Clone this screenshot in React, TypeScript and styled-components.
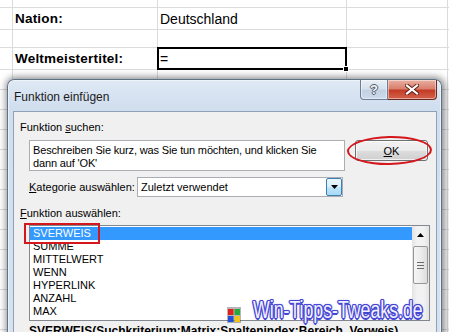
import React from 'react';
import styled, { createGlobalStyle } from 'styled-components';

const GlobalStyle = createGlobalStyle`
    html, body {
        margin: 0;
        padding: 0;
    }
    body {
        background: #fff;
        font-family: "Liberation Sans", Arial, sans-serif;
    }
`;

const uiFont = `"Liberation Sans", Arial, sans-serif`;

const Screen = styled.div`
    position: relative;
    width: 449px;
    height: 332px;
    overflow: hidden;
    background: #fff;
`;

/* spreadsheet behind the dialog */
const Sheet = styled.div`
    display: grid;
    grid-template-columns: 12px 144px 188px 100px 4px;
    grid-template-rows: 7px 21px 17px 21px repeat(14, 19px);
    gap: 1px;
    background: #d9dbdd;
    width: 452px;
`;

const Cell = styled.div<{ $bold?: boolean; $active?: boolean }>`
    position: relative;
    background: #fff;
    display: flex;
    align-items: center;
    padding-left: 2px;
    font-family: ${uiFont};
    font-size: ${(p) => (p.$bold ? '13.5px' : '14px')};
    font-weight: ${(p) => (p.$bold ? 'bold' : 'normal')};
    letter-spacing: ${(p) => (p.$bold ? '0.2px' : '0')};
    color: #000;
    white-space: nowrap;
    overflow: ${(p) => (p.$active ? 'visible' : 'hidden')};
    z-index: ${(p) => (p.$active ? 1 : 0)};
    box-shadow: ${(p) => (p.$active ? '0 0 0 1px #000, inset 0 0 0 1px #000' : 'none')};

    ${(p) =>
        p.$active &&
        `
        &::after {
            content: '';
            position: absolute;
            right: -3px;
            bottom: -3px;
            width: 4px;
            height: 4px;
            background: #000;
            border: 1px solid #fff;
        }
    `}
`;

/* dialog window */
const Window = styled.div`
    position: absolute;
    left: 7px;
    top: 79px;
    width: 435px;
    height: 270px;
    box-sizing: border-box;
    border: 1px solid #5f7189;
    border-bottom: none;
    border-radius: 7px 7px 0 0;
    background: linear-gradient(180deg, #dfe9f5 0px, #d0deee 28px, #d6e2f0 100%);
    box-shadow: 1px 0 7px 2px rgba(0, 0, 0, 0.45), inset 0 0 0 1px rgba(255, 255, 255, 0.55);
    display: flex;
    flex-direction: column;
    font-family: ${uiFont};
`;

const TitleBar = styled.div`
    display: flex;
    align-items: flex-start;
    height: 31px;
    padding: 0 4px 0 6px;
`;

const Title = styled.span`
    padding-top: 10px;
    font-size: 12px;
    line-height: 14px;
    color: #1b1b1b;
`;

const CaptionButtons = styled.div`
    margin-left: auto;
    display: flex;
`;

const CaptionButton = styled.div<{ $close?: boolean }>`
    width: ${(p) => (p.$close ? '49px' : '28px')};
    height: 20px;
    box-sizing: border-box;
    display: flex;
    align-items: center;
    justify-content: center;
    border: 1px solid ${(p) => (p.$close ? '#6b2a20' : '#6c7d94')};
    border-top: none;
    border-left-width: ${(p) => (p.$close ? '0' : '1px')};
    border-radius: ${(p) => (p.$close ? '0 0 4px 0' : '0 0 0 4px')};
    background: ${(p) =>
        p.$close
            ? 'linear-gradient(180deg, #eab0a2 0%, #d9806e 45%, #c43c26 55%, #d4634c 100%)'
            : 'linear-gradient(180deg, #e9f0f7 0%, #d6e1ed 45%, #c3d2e3 55%, #ccdaea 100%)'};
    box-shadow: inset 0 0 0 1px rgba(255, 255, 255, 0.45);
`;

const HelpGlyph = styled.span`
    font-family: ${uiFont};
    font-weight: bold;
    font-size: 13px;
    color: #f4f6f9;
    text-shadow: -1px 0 #4c5866, 1px 0 #4c5866, 0 -1px #4c5866, 0 1px #4c5866;
`;

const Client = styled.div`
    flex: 1;
    margin: 0 4px 0 5px;
    border: 1px solid #8fa1b7;
    border-bottom: none;
    background: #f0f0f0;
    padding: 8px 0 0 6px;
    display: flex;
    flex-direction: column;
    font-size: 11px;
    color: #000;
`;

const SectionLabel = styled.div<{ $top?: number }>`
    height: 14px;
    line-height: 14px;
    margin-top: ${(p) => p.$top ?? 0}px;
`;

const SearchRow = styled.div`
    display: flex;
    gap: 10px;
    margin: 6px 0 0 9px;
`;

const SearchBox = styled.div`
    width: 316px;
    height: 31px;
    box-sizing: border-box;
    border: 1px solid #abadb3;
    background: #fff;
    padding: 3px 3px;
    line-height: 13px;
    font-size: 11px;
    letter-spacing: -0.15px;
`;

const OkWrap = styled.div`
    position: relative;
`;

const PushButton = styled.div`
    width: 73px;
    height: 21px;
    box-sizing: border-box;
    border: 1px solid #707070;
    border-radius: 3px;
    background: linear-gradient(180deg, #f2f2f2 0%, #ebebeb 50%, #dddddd 51%, #cfcfcf 100%);
    box-shadow: inset 0 0 0 1px rgba(255, 255, 255, 0.7);
    display: flex;
    align-items: center;
    justify-content: center;
    font-size: 11px;
`;

const RedEllipse = styled.div`
    position: absolute;
    left: -8px;
    top: -4px;
    width: 85px;
    height: 29px;
    box-sizing: border-box;
    border: 2px solid #d3171d;
    border-radius: 50%;
    transform: rotate(-1deg);
`;

const CategoryRow = styled.div`
    display: flex;
    align-items: center;
    margin: 6px 0 0 9px;
    height: 20px;
`;

const CategoryLabel = styled.span`
    width: 108px;
`;

const Select = styled.div`
    width: 206px;
    height: 20px;
    box-sizing: border-box;
    border: 1px solid #abadb3;
    background: #fff;
    display: flex;
    align-items: center;
    padding-left: 3px;
`;

const SelectValue = styled.span`
    flex: 1;
`;

const DropButton = styled.div`
    width: 16px;
    height: 18px;
    box-sizing: border-box;
    border: 1px solid #3c7fb1;
    border-radius: 2px;
    background: linear-gradient(180deg, #eaf6fd 0%, #d9f0fc 50%, #bee6fd 51%, #a7d9f5 100%);
    display: flex;
    align-items: center;
    justify-content: center;
`;

const ListArea = styled.div`
    position: relative;
    margin: 5px 0 0 9px;
    width: 401px;
    height: 96px;
    box-sizing: border-box;
    border: 1px solid #828790;
    background: #fff;
    display: flex;
`;

const Items = styled.div`
    flex: 1;
    padding-top: 1px;
`;

const Item = styled.div<{ $selected?: boolean }>`
    height: 13px;
    line-height: 13px;
    padding-left: 3px;
    font-size: 11px;
    color: ${(p) => (p.$selected ? '#fff' : '#000')};
    background: ${(p) => (p.$selected ? '#3399ff' : 'transparent')};
`;

const RedBox = styled.div`
    position: absolute;
    left: -6px;
    top: -3px;
    width: 76px;
    height: 21px;
    box-sizing: border-box;
    border: 2px solid #d3171d;
`;

const ScrollBar = styled.div`
    width: 17px;
    background: linear-gradient(90deg, #e3e3e3 0%, #f2f2f2 30%, #f2f2f2 70%, #e3e3e3 100%);
    display: flex;
    flex-direction: column;
    align-items: center;
`;

const ScrollArrow = styled.div`
    height: 17px;
    width: 17px;
    display: flex;
    align-items: center;
    justify-content: center;
`;

const Thumb = styled.div`
    margin-top: 3px;
    width: 15px;
    height: 38px;
    box-sizing: border-box;
    border: 1px solid #979797;
    border-radius: 2px;
    background: linear-gradient(90deg, #f5f5f5 0%, #ececec 50%, #dcdcdc 100%);
    display: flex;
    flex-direction: column;
    align-items: center;
    justify-content: center;
    gap: 2px;
`;

const Grip = styled.span`
    width: 7px;
    height: 1px;
    background: #6b6b6b;
`;

const Formula = styled.div`
    margin-top: 3px;
    margin-left: 9px;
    font-size: 12px;
    font-weight: bold;
    white-space: nowrap;
`;

/* site watermark over the screenshot */
const Watermark = styled.div`
    position: absolute;
    left: 227px;
    top: 297px;
    display: flex;
    align-items: flex-end;
    gap: 12px;
`;

const WatermarkText = styled.span`
    display: inline-block;
    font-family: ${uiFont};
    font-size: 23px;
    line-height: 26px;
    color: #f1f1ff;
    transform: scaleX(0.77);
    transform-origin: left center;
    white-space: nowrap;
    text-shadow: -1.5px 0 #4545d4, 1.5px 0 #4545d4, 0 -1.5px #4545d4, 0 1.5px #4545d4,
        -1px -1px #4545d4, 1px 1px #4545d4, -1px 1px #4545d4, 1px -1px #4545d4,
        0 0 3px #6060e0;
`;

const sheetRows: string[][] = [
    ['', '', '', '', ''],
    ['', 'Nation:', 'Deutschland', '', ''],
    ['', '', '', '', ''],
    ['', 'Weltmeistertitel:', '=', '', ''],
    ...Array.from({ length: 14 }, () => ['', '', '', '', '']),
];

const functions = ['SVERWEIS', 'SUMME', 'MITTELWERT', 'WENN', 'HYPERLINK', 'ANZAHL', 'MAX'];

function WinFlag() {
    return (
        <svg width="14" height="16" viewBox="0 0 14 16">
            <rect x="0" y="0" width="14" height="16" fill="#2a2a3a" opacity="0.35" />
            <rect x="1" y="2" width="5.5" height="6" fill="#e0201b" />
            <rect x="7.5" y="2" width="5.5" height="6" fill="#27a83a" />
            <rect x="1" y="9" width="5.5" height="6" fill="#2050d8" />
            <rect x="7.5" y="9" width="5.5" height="6" fill="#f2c21a" />
        </svg>
    );
}

function CloseGlyph() {
    return (
        <svg width="14" height="11" viewBox="0 0 14 11">
            <path d="M2 1.5 L12 9.5 M12 1.5 L2 9.5" stroke="#5b1d14" strokeWidth="4" strokeLinecap="square" />
            <path d="M2 1.5 L12 9.5 M12 1.5 L2 9.5" stroke="#fff" strokeWidth="2.2" strokeLinecap="square" />
        </svg>
    );
}

function Triangle({ up }: { up?: boolean }) {
    return (
        <svg width="7" height="4" viewBox="0 0 7 4">
            <path d={up ? 'M0 4 L3.5 0 L7 4 Z' : 'M0 0 L7 0 L3.5 4 Z'} fill="#000" />
        </svg>
    );
}

export default function App() {
    return (
        <Screen>
            <GlobalStyle />
            <Sheet>
                {sheetRows.map((row, r) =>
                    row.map((text, c) => (
                        <Cell key={`${r}-${c}`} $bold={c === 1} $active={r === 3 && c === 2}>
                            {text}
                        </Cell>
                    ))
                )}
            </Sheet>

            <Window>
                <TitleBar>
                    <Title>Funktion einfügen</Title>
                    <CaptionButtons>
                        <CaptionButton>
                            <HelpGlyph>?</HelpGlyph>
                        </CaptionButton>
                        <CaptionButton $close>
                            <CloseGlyph />
                        </CaptionButton>
                    </CaptionButtons>
                </TitleBar>

                <Client>
                    <SectionLabel>
                        Funktion <u>s</u>uchen:
                    </SectionLabel>
                    <SearchRow>
                        <SearchBox>
                            Beschreiben Sie kurz, was Sie tun möchten, und klicken Sie
                            <br />
                            dann auf 'OK'
                        </SearchBox>
                        <OkWrap>
                            <PushButton>
                                <span>
                                    <u>O</u>K
                                </span>
                            </PushButton>
                            <RedEllipse />
                        </OkWrap>
                    </SearchRow>

                    <CategoryRow>
                        <CategoryLabel>
                            <u>K</u>ategorie auswählen:
                        </CategoryLabel>
                        <Select>
                            <SelectValue>Zuletzt verwendet</SelectValue>
                            <DropButton>
                                <Triangle />
                            </DropButton>
                        </Select>
                    </CategoryRow>

                    <SectionLabel $top={9}>
                        <u>F</u>unktion auswählen:
                    </SectionLabel>
                    <ListArea>
                        <Items>
                            {functions.map((name, i) => (
                                <Item key={name} $selected={i === 0}>
                                    {name}
                                </Item>
                            ))}
                        </Items>
                        <ScrollBar>
                            <ScrollArrow>
                                <Triangle up />
                            </ScrollArrow>
                            <Thumb>
                                <Grip />
                                <Grip />
                                <Grip />
                            </Thumb>
                        </ScrollBar>
                        <RedBox />
                    </ListArea>
                    <Formula>SVERWEIS(Suchkriterium;Matrix;Spaltenindex;Bereich_Verweis)</Formula>
                </Client>
            </Window>

            <Watermark>
                <WinFlag />
                <WatermarkText>Win-Tipps-Tweaks.de</WatermarkText>
            </Watermark>
        </Screen>
    );
}
